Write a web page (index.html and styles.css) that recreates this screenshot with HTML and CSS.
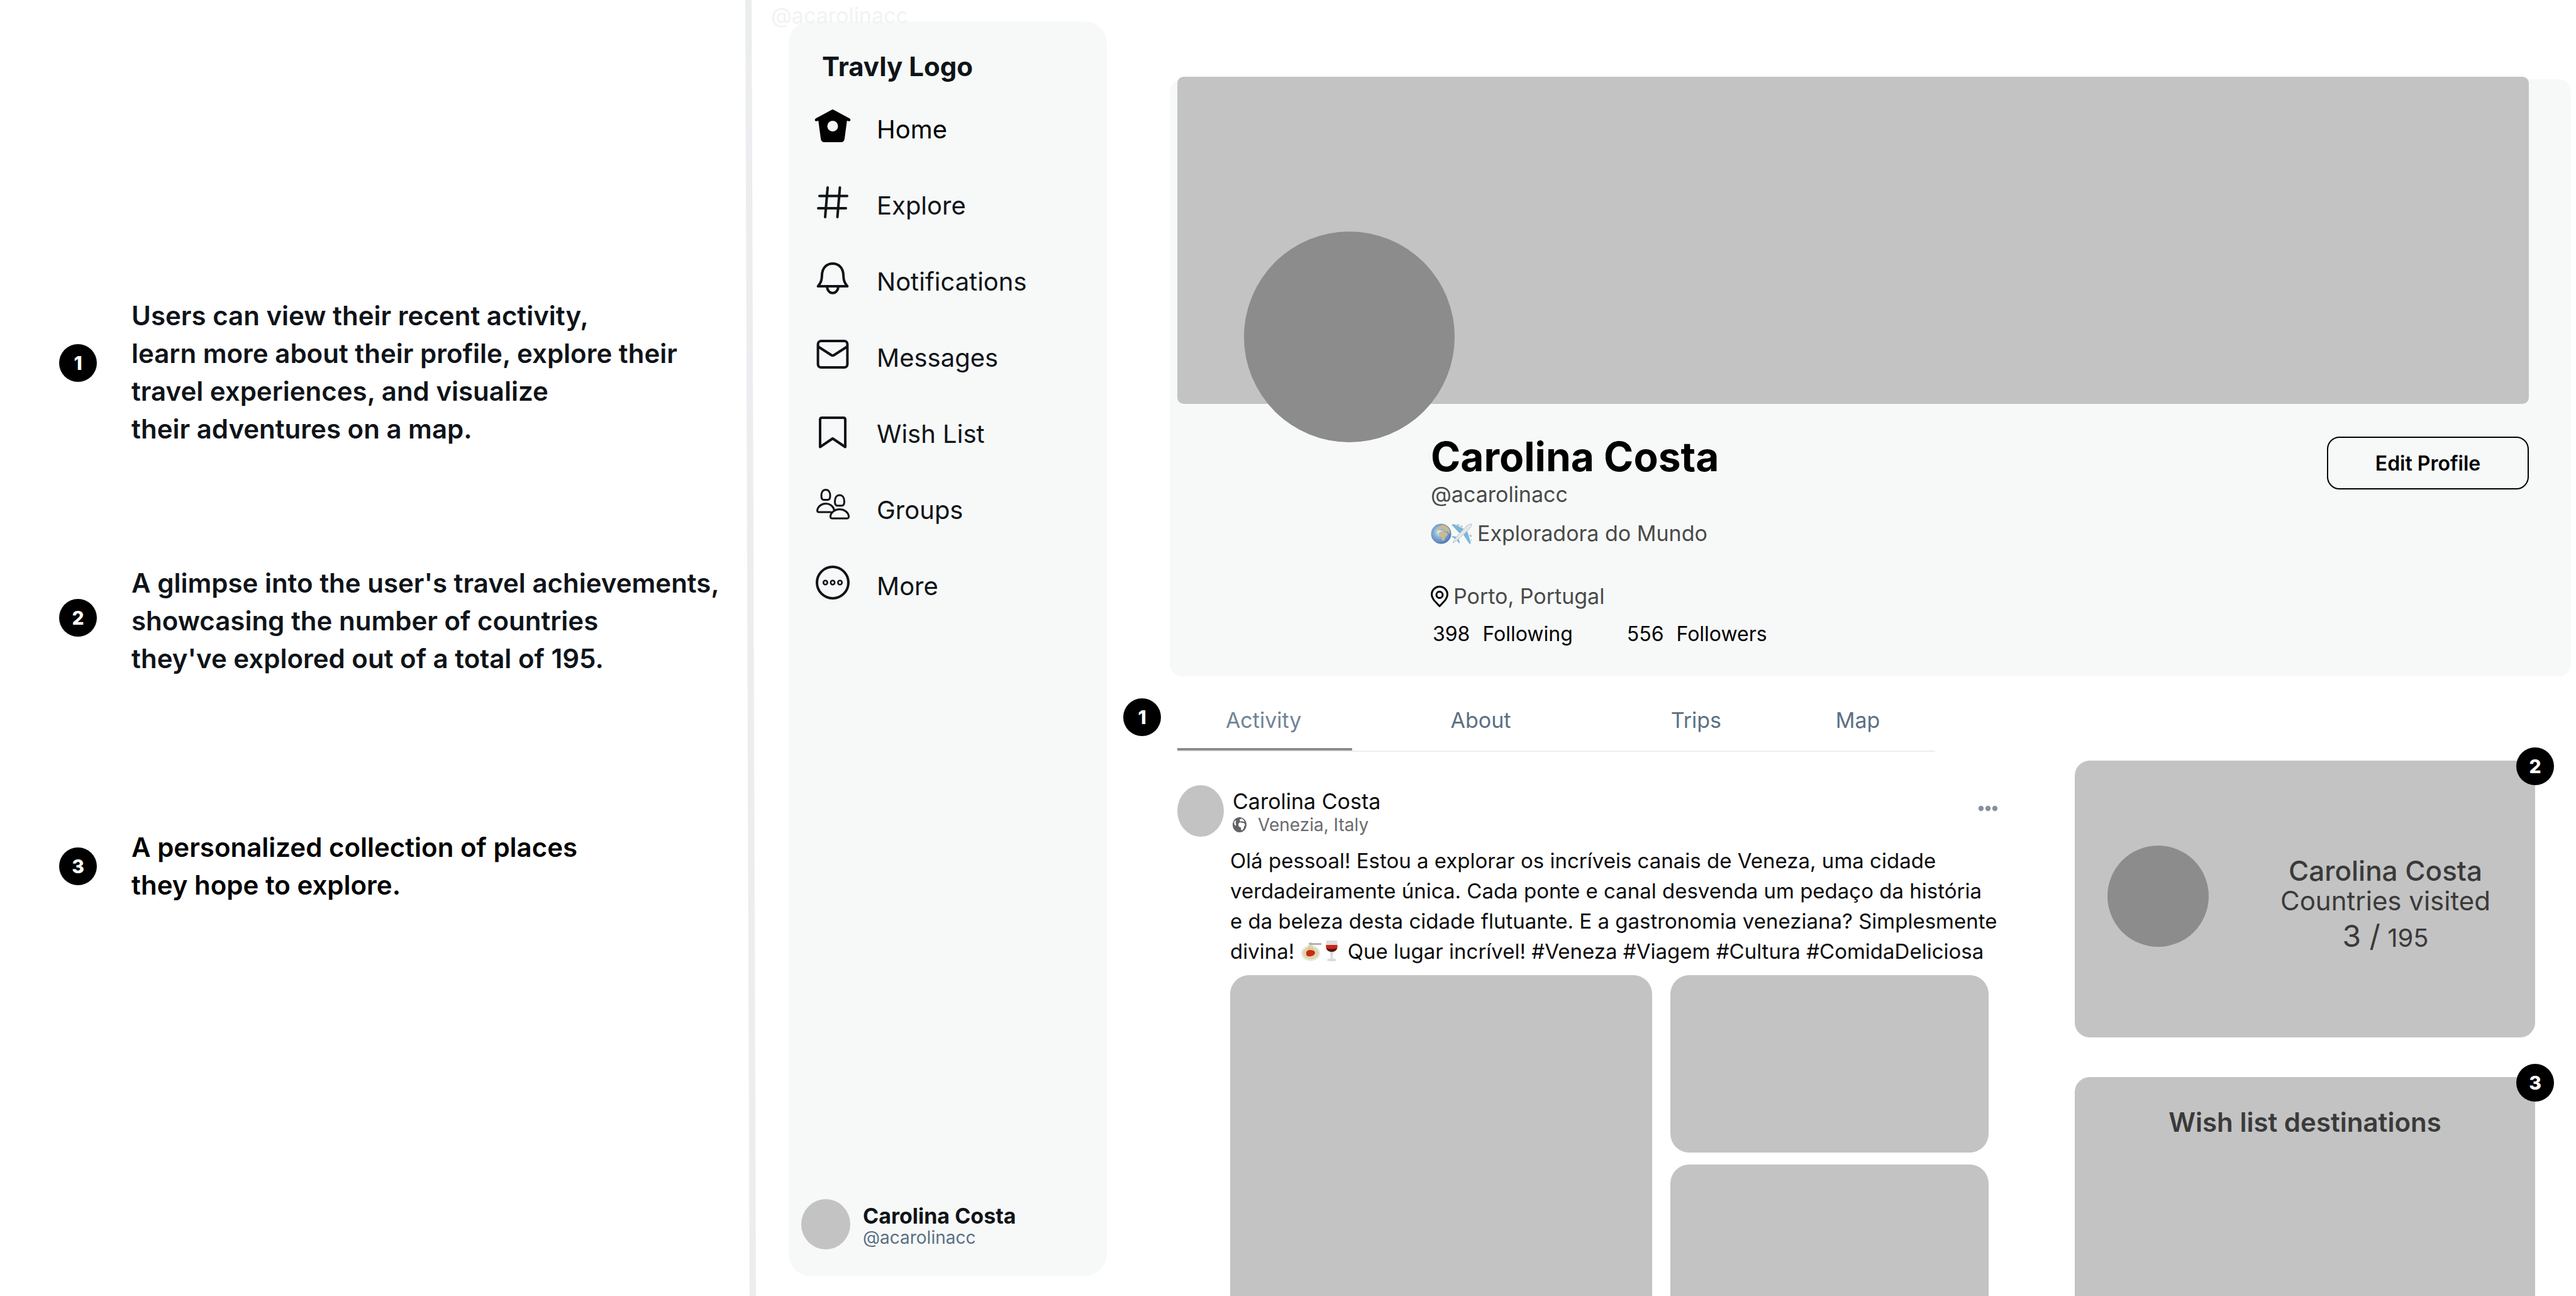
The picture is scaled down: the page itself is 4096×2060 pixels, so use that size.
FILE: index.html
```html
<!DOCTYPE html>
<html lang="en">
<head>
<meta charset="utf-8">
<meta name="viewport" content="width=device-width, initial-scale=1">
<title>Travly – Profile</title>
<link rel="stylesheet" href="styles.css">
</head>
<body>
<div class="board">
  <section class="notes" aria-label="Annotations">
    <div class="note note-profile">
      <span class="badge">1</span>
      <p>Users can view their recent activity,<br>learn more about their profile, explore their<br>travel experiences, and visualize<br>their adventures on a map.</p>
    </div>
    <div class="note note-achievements">
      <span class="badge">2</span>
      <p>A glimpse into the user's travel achievements,<br>showcasing the number of countries<br>they've explored out of a total of 195.</p>
    </div>
    <div class="note note-wishlist">
      <span class="badge">3</span>
      <p>A personalized collection of places<br>they hope to explore.</p>
    </div>
  </section>

  <div class="divider"></div>

  <div class="side">
    <span class="ghost-handle">@acarolinacc</span>
    <aside class="sidebar">
      <div class="brand">Travly Logo</div>
      <nav class="menu" aria-label="Main">
        <a href="#home" class="menu-item current">
          <svg class="menu-icon" viewBox="0 0 64 64"><path fill="currentColor" fill-rule="evenodd" d="M30.600 6.600Q32 5.600 33.400 6.600L58.500 20Q61 21.500 60 24Q58.500 25.500 54.800 23.800L51 52Q50.300 58 45 58H19Q13.700 58 13 52L9.200 23.800Q5.500 25.500 4 24Q3 21.500 5.500 20ZM32 24a8.500 8.500 0 1 0 0 17a8.500 8.500 0 1 0 0-17Z"/></svg>
          <span>Home</span>
        </a>
        <a href="#explore" class="menu-item">
          <svg class="menu-icon line" viewBox="0 0 64 64"><path d="M24 9l-4 47M43.500 9l-4 47M11 22.500h44M9 42h44"/></svg>
          <span>Explore</span>
        </a>
        <a href="#notifications" class="menu-item">
          <svg class="menu-icon line" viewBox="0 0 64 64"><path d="M32 9C22 9 15.500 16 15 27C14.800 36 13 40 8.600 45H55.400C51 40 49.200 36 49 27C48.500 16 42 9 32 9ZM23 46c.500 6 4.500 9.700 9 9.700s8.500-3.700 9-9.700"/></svg>
          <span>Notifications</span>
        </a>
        <a href="#messages" class="menu-item">
          <svg class="menu-icon line" viewBox="0 0 64 64"><rect x="8.600" y="11" width="46.800" height="42" rx="5"/><path d="M9 20l21 13.500q2 1.200 4 0L55 20"/></svg>
          <span>Messages</span>
        </a>
        <a href="#wishlist" class="menu-item">
          <svg class="menu-icon line" viewBox="0 0 64 64"><path d="M12 15q0-3 3-3h34q3 0 3 3v43.500L32 45 12 58.500Z"/></svg>
          <span>Wish List</span>
        </a>
        <a href="#groups" class="menu-item">
          <svg class="menu-icon line thin" viewBox="0 0 64 64"><path d="M21 5.500c-4.500 0-7 4-7 9.500q0 6.500 4 6.500h6q4 0 4-6.500c0-5.500-2.500-9.500-7-9.500ZM43 14c-4.500 0-7.500 4-7.500 10q0 6.800 4 6.800h7q4 0 4-6.800c0-6-3-10-7.500-10ZM29 41H10q-2.500 0-2.500-3c1-6 7-10.500 13.500-10.500s12 4 13.300 10M31 51h24q3 0 2.500-4c-1-6-7.500-10.500-14.500-10.500s-13.500 4.500-14.500 10.500q-.500 4 2.500 4Z"/></svg>
          <span>Groups</span>
        </a>
        <a href="#more" class="menu-item">
          <svg class="menu-icon line" viewBox="0 0 64 64"><circle cx="32" cy="32" r="25"/><g stroke-width="2.600"><circle cx="20.400" cy="32" r="3.200"/><circle cx="32" cy="32" r="3.200"/><circle cx="43.600" cy="32" r="3.200"/></g></svg>
          <span>More</span>
        </a>
      </nav>
      <div class="account">
        <div class="account-avatar"></div>
        <div class="account-text">
          <strong>Carolina Costa</strong>
          <span>@acarolinacc</span>
        </div>
      </div>
    </aside>
  </div>

  <main class="main">
    <header class="profile">
      <div class="cover"><div class="portrait"></div></div>
      <div class="profile-info">
        <div class="profile-text">
          <h1>Carolina Costa</h1>
          <p class="handle">@acarolinacc</p>
          <p class="bio">
            <svg class="emoji" viewBox="0 0 33 33" role="img" aria-label="Globe">
              <defs><radialGradient id="sea" cx=".42" cy=".42" r=".6"><stop offset="0" stop-color="#eafbe0"/><stop offset=".4" stop-color="#8fb8d8"/><stop offset="1" stop-color="#4f78b4"/></radialGradient></defs>
              <circle cx="16.500" cy="16.500" r="16" fill="url(#sea)"/>
              <path fill="#cdb98d" d="M13 5q5-4 9-2q6 2 8 8q1 4 0 6l-3-4-4-1q-3-2-6-1l-5 0q-2-3 1-6zM14 14q4-2 7 0l5 1 1 3-4 4-1 4-3 2-2-4-1-4-3-2q-1-2 1-4z"/>
              <path fill="#8fb5d2" d="M15 8.500l5 .500 3 2-3 .500-5-1z"/>
            </svg><svg class="emoji" viewBox="0 0 33 33" role="img" aria-label="Airplane">
              <path fill="#79b7d9" d="M0 2l4-1L20 9l-6 8zM31 32l-3 0L19 18l6-6zM0 21l2-1 9 2-3 4zM12 32l1-2-2-7-3 3z"/>
              <path fill="#c4c8cc" d="M8 1l4 0 1 4-4-1zM14 3l3 0 1 4-3-1zM32 18l0 4-3-1-1-3zM32 25l0 3-3-1z"/>
              <path fill="#e6e7e9" stroke="#b4b8bc" stroke-width=".800" d="M32 1q-4-1-8 3L9 20Q4 26 2 31Q8 28 13 23L28 9Q33 4 32 1Z"/>
            </svg>
            <span>Exploradora do Mundo</span>
          </p>
          <p class="place">
            <svg class="pin" viewBox="0 0 28 34" aria-hidden="true"><path d="M14 1.500C7 1.500 1.500 7 1.500 14C1.500 21 8 26 14 32.500C20 26 26.500 21 26.500 14C26.500 7 21 1.500 14 1.500Z"/><circle cx="14" cy="14.500" r="5"/></svg>
            <span>Porto, Portugal</span>
          </p>
          <p class="stats"><a href="#following"><b>398</b> <span>Following</span></a><a href="#followers"><b>556</b> <span>Followers</span></a></p>
        </div>
        <button type="button" class="edit">Edit Profile</button>
      </div>
    </header>

    <div class="content">
      <div class="feed">
        <nav class="tabs" aria-label="Profile sections">
          <span class="badge tabs-badge">1</span>
          <a href="#activity" class="tab active">Activity</a>
          <a href="#about" class="tab">About</a>
          <a href="#trips" class="tab">Trips</a>
          <a href="#map" class="tab">Map</a>
        </nav>
        <article class="post">
          <header class="post-head">
            <div class="post-avatar"></div>
            <div class="post-author">
              <span class="post-name">Carolina Costa</span>
              <span class="post-place">
                <svg class="world" viewBox="0 0 22 24" aria-hidden="true"><ellipse cx="11" cy="12" rx="11" ry="12" fill="#626266"/><path fill="#fff" d="M10 9l2-1 3 1 3 0 2 4-2 1 0 3-3 4-1.500-1-.500-4-3-1-1-3zM11 4l3-2 3 2 2 3-3 0-2-1-2 1zM2.500 7l2-2 1 1-1 3 1 2-1 3-2-3z"/></svg>
                Venezia, Italy
              </span>
            </div>
            <button type="button" class="dots" aria-label="Post options"><svg viewBox="0 0 30 10"><circle cx="4" cy="5" r="4.200"/><circle cx="15" cy="5" r="4.200"/><circle cx="26" cy="5" r="4.200"/></svg></button>
          </header>
          <p class="post-text">Olá pessoal! Estou a explorar os incríveis canais de Veneza, uma cidade<br>verdadeiramente única. Cada ponte e canal desvenda um pedaço da história<br>e da beleza desta cidade flutuante. E a gastronomia veneziana? Simplesmente<br>divina! <svg class="emoji" viewBox="0 0 33 33" role="img" aria-label="Spaghetti"><ellipse cx="16" cy="20" rx="15" ry="12.500" fill="#e6e6e2"/><ellipse cx="16" cy="20" rx="12.500" ry="10" fill="#ddd6a8"/><path fill="#c92a17" d="M9 18q3-4 7-3 6 0 7 4 0 5-7 6-6 1-7-3z"/><path d="M12 16q1-6 2-10M15 15q-1-5 1-9M19 16q0-6-2-10" fill="none" stroke="#d9bf72"/><path fill="#b3b3b3" d="M12 5q3-3 7-1l14 0v3l-13 0q-4 1-8-2z"/></svg><svg class="emoji" viewBox="0 0 33 33" role="img" aria-label="Wine glass"><path fill="#dcdcde" d="M8 0h17l1 10q0 7-7 9l-1 9q6 1 6 3 0 2-7.500 2T9 31q0-2 6-3l-1-9q-7-2-7-9z"/><path fill="#cc2418" d="M7.500 7h18v4q-1 6-9 7-8-1-9-7z"/><path fill="#4c1512" d="M8 12q8 3 17 0-1 5-8.500 6Q9 17 8 12z"/></svg> Que lugar incrível! #Veneza #Viagem #Cultura #ComidaDeliciosa</p>
          <div class="photos">
            <div class="photo photo-tall"></div>
            <div class="photo"></div>
            <div class="photo"></div>
          </div>
        </article>
      </div>

      <aside class="widgets">
        <section class="card countries">
          <span class="badge card-badge">2</span>
          <div class="card-avatar"></div>
          <div class="card-text">
            <span class="card-name">Carolina Costa</span>
            <span>Countries visited</span>
            <span class="score"><span class="score-now">3 /</span> 195</span>
          </div>
        </section>
        <section class="card wishes">
          <span class="badge card-badge">3</span>
          <h2>Wish list destinations</h2>
        </section>
      </aside>
    </div>
  </main>
</div>
</body>
</html>
```
FILE: styles.css
```css
:root {
  --ink: #0f1419;
  --panel: #f7f9f8;
  --fill: #c3c3c3;
  --fill-dark: #8c8c8c;
  --slate: #5b7083;
}

* { box-sizing: border-box; }

body {
  margin: 0;
  background: #fff;
  color: var(--ink);
  font-family: Inter, "Open Sans", sans-serif;
  font-size: 34px;
  line-height: 40px;
  white-space: nowrap;
}

p, h1, h2 { margin: 0; }
a { color: inherit; text-decoration: none; }
svg { display: block; flex: none; }
button { font: inherit; color: inherit; background: none; border: 0; padding: 0; cursor: pointer; }

.board {
  display: grid;
  grid-template-columns: minmax(0, 1185fr) 17px 558px minmax(0, 2336fr);
  height: 100vh;
  overflow: hidden;
}

.badge {
  display: flex;
  align-items: center;
  justify-content: center;
  width: 60px;
  height: 60px;
  border-radius: 50%;
  background: #000;
  color: #fff;
  font-size: 30px;
  font-weight: 800;
}

/* Annotations */
.notes { padding: 472px 0 0 94px; }
.note {
  display: grid;
  grid-template-columns: 60px 1fr;
  column-gap: 55px;
  align-items: center;
  font-size: 42px;
  font-weight: 600;
  line-height: 60px;
}
.note-profile .badge { margin-bottom: 30px; }
.note-achievements { margin-top: 185px; }
.note-achievements .badge { margin-bottom: 10px; }
.note-wishlist { margin-top: 240px; color: #000; }

.divider {
  background: #ebedef;
  clip-path: polygon(0 0, 60% 0, 100% 100%, 40% 100%);
}

/* Sidebar */
.side {
  position: relative;
  display: flex;
  padding: 34px 0 32px 52px;
}
.ghost-handle {
  position: absolute;
  left: 24px;
  top: 5px;
  color: #f1f3f3;
}
.sidebar {
  flex: 1;
  display: flex;
  flex-direction: column;
  padding: 48px 0 42px;
  border-radius: 34px;
  background: var(--panel);
}
.brand {
  padding-left: 53px;
  font-size: 42px;
  font-weight: 700;
  line-height: 48px;
}
.menu { margin-top: 9px; }
.menu-item {
  display: flex;
  align-items: center;
  gap: 38px;
  height: 121px;
  padding-left: 38px;
  font-size: 40px;
}
.menu-item span { padding-top: 12px; }
.menu-item.current { color: #000; }
.menu-icon { width: 64px; height: 64px; }
.line {
  fill: none;
  stroke: currentColor;
  stroke-width: 4;
  stroke-linecap: round;
  stroke-linejoin: round;
}
.thin { stroke-width: 3; }

.account {
  display: flex;
  align-items: center;
  gap: 20px;
  margin-top: auto;
  padding-left: 20px;
}
.account-avatar {
  width: 78px;
  height: 80px;
  border-radius: 50%;
  background: var(--fill);
}
.account-text {
  display: flex;
  flex-direction: column;
  padding-top: 8px;
  line-height: 34px;
}
.account-text strong { font-size: 34px; }
.account-text span { font-size: 28px; color: var(--slate); }

/* Profile header */
.main {
  display: flex;
  flex-direction: column;
  min-height: 0;
  padding: 126px 8px 0 100px;
}
.profile {
  padding: 0 67px 47px 12px;
  border-radius: 20px;
  background: var(--panel);
}
.cover {
  position: relative;
  height: 520px;
  margin-top: -4px;
  border-radius: 10px;
  background: var(--fill);
}
.portrait {
  position: absolute;
  left: 106px;
  bottom: -61px;
  width: 335px;
  height: 335px;
  border-radius: 50%;
  background: var(--fill-dark);
}
.profile-info {
  display: flex;
  justify-content: space-between;
  align-items: flex-start;
  padding: 50px 0 0 403px;
}
.profile h1 {
  color: #000;
  font-size: 64px;
  font-weight: 700;
  line-height: 68px;
}
.handle, .bio, .place { color: #4a4a4a; }
.handle { margin-top: 6px; }
.bio, .place { display: flex; align-items: center; }
.bio { margin-top: 22px; }
.bio span { padding-left: 8px; }
.emoji { width: 33px; height: 33px; }
.place { gap: 8px; margin-top: 60px; }
.pin {
  width: 28px;
  height: 34px;
  fill: none;
  stroke: #000;
  stroke-width: 3;
}
.stats {
  display: flex;
  gap: 86px;
  margin-top: 20px;
  padding-left: 3px;
  color: #000;
  font-size: 32px;
}
.stats b { font-weight: 400; }
.stats a { display: flex; gap: 20px; }
.edit {
  width: 321px;
  height: 84px;
  margin-top: 2px;
  padding-top: 2px;
  border: 2px solid #000;
  border-radius: 20px;
  color: #000;
  font-size: 32px;
  font-weight: 600;
}

/* Feed */
.content {
  flex: 1;
  display: grid;
  grid-template-columns: minmax(0, 1fr) 732px;
  grid-template-rows: minmax(0, 1fr);
  column-gap: 117px;
  min-height: 0;
  padding: 0 57px 0 12px;
}
.feed { display: flex; flex-direction: column; min-height: 0; }
.tabs {
  position: relative;
  display: grid;
  grid-template-columns: 278fr 412fr 272fr 242fr;
  width: 92%;
  border-bottom: 2px solid #eceeee;
  color: var(--slate);
  text-align: center;
}
.tabs-badge { position: absolute; left: -86px; top: 35px; }
.tab { padding: 50px 4px 24px 0; border-bottom: 4px solid transparent; }
.tab.active { color: #708497; border-color: var(--fill-dark); }

.post {
  flex: 1;
  display: flex;
  flex-direction: column;
  min-height: 0;
  margin-top: 53px;
}
.post-head { display: flex; gap: 14px; padding-right: 6px; }
.post-avatar {
  width: 74px;
  height: 82px;
  border-radius: 50%;
  background: var(--fill);
}
.post-author {
  flex: 1;
  display: flex;
  flex-direction: column;
  justify-content: center;
  padding-top: 4px;
  color: #0b0b0b;
}
.post-place {
  display: flex;
  align-items: center;
  gap: 18px;
  color: #6a6a6e;
  font-size: 28px;
  line-height: 34px;
}
.world { width: 22px; height: 24px; }
.dots { height: 74px; }
.dots svg { width: 30px; height: 10px; fill: #87919b; }
.post-text {
  margin: 14px 0 0 84px;
  color: #0b0b0b;
  font-size: 33px;
  line-height: 48px;
}
.post-text .emoji { display: inline-block; vertical-align: -4px; }
.photos {
  flex: 1;
  display: grid;
  grid-template-columns: 670fr 506fr;
  grid-template-rows: 282px minmax(0, 1fr);
  gap: 19px 29px;
  margin: 14px 20px 0 84px;
}
.photo { border-radius: 30px; background: var(--fill); }
.photo-tall { grid-row: span 2; }
.photo-tall, .photo:last-child { border-radius: 30px 30px 0 0; }

/* Widgets */
.widgets {
  display: flex;
  flex-direction: column;
  gap: 63px;
  padding-top: 134px;
  color: #3a3a3a;
}
.card {
  position: relative;
  border-radius: 24px;
  background: var(--fill);
}
.card-badge { position: absolute; right: -30px; top: -21px; }
.countries {
  display: flex;
  align-items: center;
  gap: 43px;
  height: 440px;
  padding-left: 52px;
}
.card-avatar {
  width: 161px;
  height: 161px;
  margin-bottom: 10px;
  border-radius: 50%;
  background: var(--fill-dark);
}
.card-text {
  flex: 1;
  display: flex;
  flex-direction: column;
  padding-top: 24px;
  font-size: 42px;
  line-height: 48px;
  text-align: center;
}
.card-name { font-size: 44px; font-weight: 500; }
.score { font-size: 40px; line-height: 64px; }
.score-now { font-size: 48px; }
.wishes {
  flex: 1;
  padding-top: 48px;
  border-radius: 24px 24px 0 0;
  text-align: center;
}
.wishes h2 {
  font-size: 42px;
  font-weight: 600;
  line-height: 48px;
}
```
